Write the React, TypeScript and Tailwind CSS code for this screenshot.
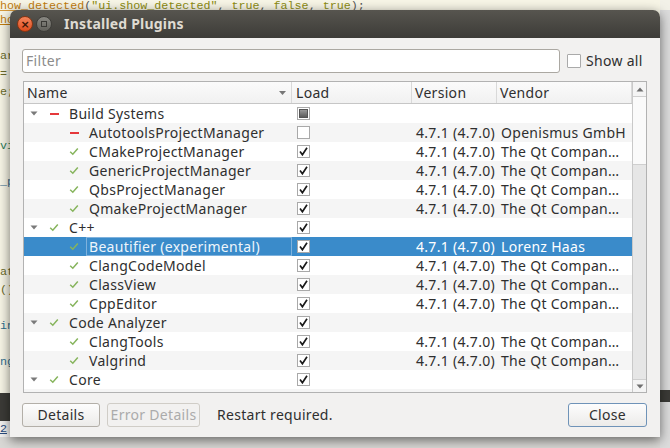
import React from "react";

type Status = "ok" | "err";
type LoadState = "on" | "off" | "part";

type PluginRow = {
  name: string;
  level: 0 | 1;
  status: Status;
  load: LoadState;
  version?: string;
  vendor?: string;
  selected?: boolean;
};

const VER = "4.7.1 (4.7.0)";
const QT = "The Qt Compan…";

const rows: PluginRow[] = [
  { name: "Build Systems", level: 0, status: "err", load: "part" },
  { name: "AutotoolsProjectManager", level: 1, status: "err", load: "off", version: VER, vendor: "Openismus GmbH" },
  { name: "CMakeProjectManager", level: 1, status: "ok", load: "on", version: VER, vendor: QT },
  { name: "GenericProjectManager", level: 1, status: "ok", load: "on", version: VER, vendor: QT },
  { name: "QbsProjectManager", level: 1, status: "ok", load: "on", version: VER, vendor: QT },
  { name: "QmakeProjectManager", level: 1, status: "ok", load: "on", version: VER, vendor: QT },
  { name: "C++", level: 0, status: "ok", load: "on" },
  { name: "Beautifier (experimental)", level: 1, status: "ok", load: "on", version: VER, vendor: "Lorenz Haas", selected: true },
  { name: "ClangCodeModel", level: 1, status: "ok", load: "on", version: VER, vendor: QT },
  { name: "ClassView", level: 1, status: "ok", load: "on", version: VER, vendor: QT },
  { name: "CppEditor", level: 1, status: "ok", load: "on", version: VER, vendor: QT },
  { name: "Code Analyzer", level: 0, status: "ok", load: "on" },
  { name: "ClangTools", level: 1, status: "ok", load: "on", version: VER, vendor: QT },
  { name: "Valgrind", level: 1, status: "ok", load: "on", version: VER, vendor: QT },
  { name: "Core", level: 0, status: "ok", load: "on" },
  // only the top few pixels of this one are in view
  { name: "CodePaster", level: 1, status: "ok", load: "on" },
];

const Arrow = () => (
  <svg width="8" height="5" viewBox="0 0 8 5">
    <path d="M0.5 0.5 L7.5 0.5 L4 4.5 Z" fill="#7a7a7a" />
  </svg>
);

const StatusIcon = ({ status }: { status: Status }) =>
  status === "ok" ? (
    <svg width="10" height="9" viewBox="0 0 10 9">
      <path d="M1.2 4.8 L3.8 7.2 L8.8 1.5" fill="none" stroke="#86b45c" strokeWidth="1.5" />
    </svg>
  ) : (
    <span className="block w-[9px] h-[2px] bg-[#e5383b]" />
  );

const Checkbox = ({ state }: { state: LoadState }) => (
  <span className="flex items-center justify-center w-[13px] h-[13px] border border-[#a9a9a9] bg-white">
    {state === "on" && (
      <svg width="11" height="11" viewBox="0 0 11 11">
        <path d="M2 5.6 L4.4 8.8 L9 1.8" fill="none" stroke="#1a1a1a" strokeWidth="1.7" />
      </svg>
    )}
    {state === "part" && (
      <span className="block w-[9px] h-[9px] border border-[#555] bg-gradient-to-b from-[#9a9a9a] to-[#5c5c5c]" />
    )}
  </span>
);

const TreeRow = ({ row, index }: { row: PluginRow; index: number }) => {
  const bg = row.selected
    ? "bg-[#3a8bca] text-white"
    : index % 2 === 0
      ? "bg-white text-[#2f2f2f]"
      : "bg-[#f5f5f5] text-[#2f2f2f]";

  return (
    <div className={`grid grid-cols-[268px_120px_85px_1fr] h-[19px] shrink-0 items-center ${bg}`}>
      <div className="flex items-center h-full">
        {row.level === 1 && <span className="w-5 shrink-0" />}
        <span className="w-5 shrink-0 flex justify-center">{row.level === 0 && <Arrow />}</span>
        <span className="w-5 shrink-0 flex justify-center">
          <StatusIcon status={row.status} />
        </span>
        <span
          className={`flex-1 h-full ml-[2px] pl-[2px] flex items-center border whitespace-nowrap ${
            row.selected ? "border-[#7fb2dd] text-[#eef5fb]" : "border-transparent"
          }`}
        >
          {row.name}
        </span>
      </div>
      <div className="pl-[5px] flex items-center">
        <Checkbox state={row.load} />
      </div>
      <div className="pl-[4px] whitespace-nowrap">{row.version}</div>
      <div className="pl-[4px] whitespace-nowrap">{row.vendor}</div>
    </div>
  );
};

const Scrollbar = () => (
  <div className="w-[14px] border-l border-[#c9c9c9] flex flex-col bg-[#e6e6e6]">
    <div className="h-[15px] flex items-center justify-center bg-[#f4f4f4] border-b border-[#cfcfcf]">
      <svg width="8" height="5" viewBox="0 0 8 5">
        <path d="M0.5 4.5 L7.5 4.5 L4 0.5 Z" fill="#6f6f6f" />
      </svg>
    </div>
    <div className="h-[68px] bg-[#fafafa] border-b border-[#cfcfcf]" />
    <div className="flex-1" />
    <div className="h-[13px] flex items-center justify-center bg-[#f4f4f4] border-t border-[#cfcfcf]">
      <svg width="8" height="5" viewBox="0 0 8 5">
        <path d="M0.5 0.5 L7.5 0.5 L4 4.5 Z" fill="#6f6f6f" />
      </svg>
    </div>
  </div>
);

const HeaderCell = ({ label, pad, children }: { label: string; pad: string; children?: React.ReactNode }) => (
  <div className={`flex items-center h-full border-r border-[#d9d9d9] ${pad}`}>
    <span className="flex-1">{label}</span>
    {children}
  </div>
);

const PluginTree = () => (
  <div className="ml-px h-[312px] flex border border-[#b2b2b2] bg-white">
    <div className="flex-1 flex flex-col overflow-hidden">
      <div className="grid grid-cols-[268px_120px_85px_1fr] h-[22px] shrink-0 bg-gradient-to-b from-[#fbfbfb] to-[#f1f1f1] border-b border-[#c6c6c6] text-[#2f2f2f]">
        <HeaderCell label="Name" pad="pl-[3px] pr-[5px]">
          <svg width="7" height="4" viewBox="0 0 7 4">
            <path d="M0 0 L7 0 L3.5 4 Z" fill="#777" />
          </svg>
        </HeaderCell>
        <HeaderCell label="Load" pad="pl-[4px]" />
        <HeaderCell label="Version" pad="pl-[3px]" />
        <HeaderCell label="Vendor" pad="pl-[3px]" />
      </div>
      {rows.map((row, i) => (
        <TreeRow key={row.name} row={row} index={i} />
      ))}
    </div>
    <Scrollbar />
  </div>
);

const Button = ({ label, width, variant }: { label: string; width: string; variant?: "disabled" | "default" }) => {
  const tone =
    variant === "disabled"
      ? "border-[#d0cdc7] text-[#ababab] bg-[#f2f1f0]"
      : variant === "default"
        ? "border-[#6f93b8] text-[#2f2f2f] bg-gradient-to-b from-[#fdfdfd] to-[#ecebe9]"
        : "border-[#b3afa8] text-[#2f2f2f] bg-gradient-to-b from-[#fdfdfd] to-[#ecebe9]";
  return (
    <div className={`h-[24px] ${width} rounded-[3px] border flex items-center justify-center ${tone}`}>{label}</div>
  );
};

const codeFont = "font-['Liberation_Mono','DejaVu_Sans_Mono',monospace] text-[11.7px] leading-[13px] tracking-normal";

const CodeBackground = () => (
  <div className="flex h-full">
    <div className="flex-1 flex flex-col bg-[#f7f5e6]">
      <div className={`${codeFont} whitespace-nowrap`}>
        <span className="text-[#c27d0e] underline decoration-[#d89a3a]">how_detected</span>
        <span className="text-[#555]">(</span>
        <span className="text-[#8c8c12]">"ui.show_detected"</span>
        <span className="text-[#555]">, </span>
        <span className="text-[#8c8c12]">true</span>
        <span className="text-[#555]">, </span>
        <span className="text-[#8c8c12]">false</span>
        <span className="text-[#555]">, </span>
        <span className="text-[#8c8c12]">true</span>
        <span className="text-[#555]">);</span>
      </div>
      <div className={`${codeFont} mt-[1px] flex flex-col gap-[5px] text-[#6b6b2a]`}>
        <span className="text-[#c27d0e] underline">ho</span>
        <span>&nbsp;</span>
        <span>ar</span>
        <span>=</span>
        <span>e;</span>
        <span>&nbsp;</span>
        <span>&nbsp;</span>
        <span className="text-[#2e7d5b]">vi</span>
        <span>&nbsp;</span>
        <span className="text-[#3b6e8f]">_p</span>
        <span>&nbsp;</span>
        <span>&nbsp;</span>
        <span>&nbsp;</span>
        <span>&nbsp;</span>
        <span>at</span>
        <span>()</span>
        <span>&nbsp;</span>
        <span className="text-[#2f6f8f]">in</span>
        <span>&nbsp;</span>
        <span className="text-[#2f6f8f]">ng</span>
      </div>
      <div className="flex-1" />
      <div className="h-[28px] bg-[#3c3b37]" />
      <div className={`${codeFont} h-[16px] bg-[#f2f1f0] text-[#2a4d80] underline pt-[2px]`}>2</div>
      <div className="h-[11px] bg-[#d9d8d5]" />
    </div>
    <div className="w-[10px] flex flex-col bg-[#dcdcdc]">
      <div className="h-[10px] bg-[#f2f1e8]" />
      <div className="flex-1" />
      <div className="h-[12px] mb-[46px] bg-[#3c3b37]" />
    </div>
  </div>
);

const TitleBar = () => (
  <div className="h-[28px] rounded-t-[7px] bg-gradient-to-b from-[#57554f] to-[#3d3c38] flex items-center pl-[7px]">
    <div className="w-[16px] h-[16px] rounded-full bg-gradient-to-b from-[#f4845a] to-[#de4a18] border border-[#8a3512] flex items-center justify-center text-[#3a1606] text-[11px] leading-none font-bold font-['DejaVu_Sans',sans-serif] tracking-normal">
      ×
    </div>
    <div className="ml-[3px] w-[16px] h-[16px] rounded-full bg-gradient-to-b from-[#8a8983] to-[#62615b] border border-[#3e3d39] flex items-center justify-center">
      <span className="block w-[6px] h-[6px] border border-[#3a3935]" />
    </div>
    <span className="ml-[12px] text-[14px] font-bold tracking-[0.2px] text-[#dfdbd2]">Installed Plugins</span>
  </div>
);

export default function App() {
  return (
    <div className="relative w-[670px] h-[448px] overflow-hidden font-['Noto_Sans','DejaVu_Sans',sans-serif] text-[14px] tracking-[0.3px] leading-none">
      <CodeBackground />
      <div className="absolute left-[10px] top-[10px] w-[650px] h-[427px] flex flex-col shadow-[0_3px_12px_rgba(0,0,0,0.55)] rounded-t-[7px]">
        <TitleBar />
        <div className="flex-1 bg-[#f2f1f0] pl-[12px] pr-[13px] pt-[11px] flex flex-col">
          <div className="flex items-center">
            <div className="w-[538px] h-[24px] rounded-[3px] border border-[#aba8a2] bg-white flex items-center pl-[3px] text-[#8c8c8c]">
              Filter
            </div>
            <span className="ml-[7px] w-[14px] h-[14px] border border-[#aaa] bg-white rounded-[1px]" />
            <span className="ml-[5px] text-[#2f2f2f]">Show all</span>
          </div>
          <div className="mt-[8px]">
            <PluginTree />
          </div>
          <div className="mt-[10px] flex items-center">
            <Button label="Details" width="w-[78px]" />
            <div className="ml-[7px]">
              <Button label="Error Details" width="w-[93px]" variant="disabled" />
            </div>
            <span className="ml-[17px] text-[#2f2f2f]">Restart required.</span>
            <div className="flex-1" />
            <Button label="Close" width="w-[79px]" variant="default" />
          </div>
        </div>
      </div>
    </div>
  );
}
